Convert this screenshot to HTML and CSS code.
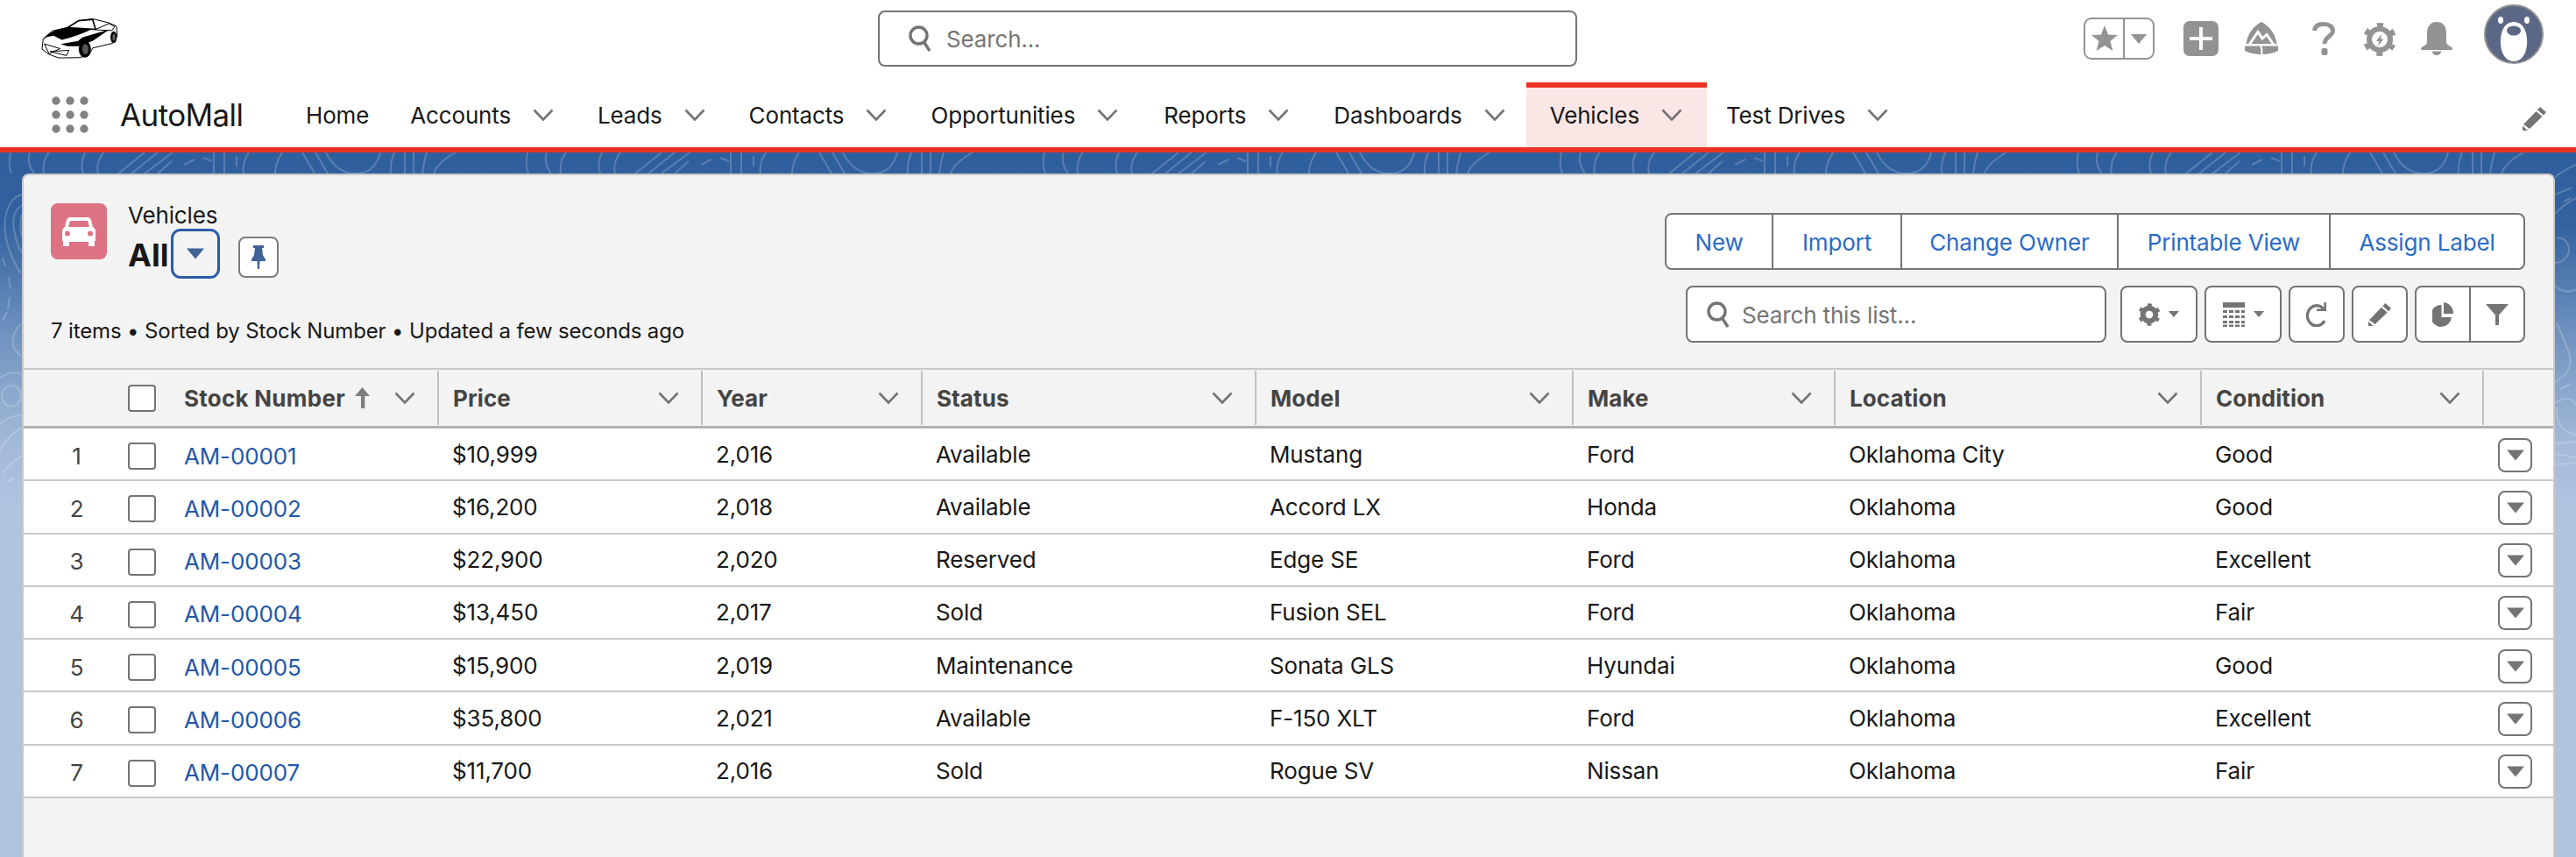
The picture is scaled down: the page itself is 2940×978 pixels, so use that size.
FILE: index.html
```html
<!DOCTYPE html>
<html lang="en">
<head>
    <meta charset="UTF-8">
    <title>Vehicles | AutoMall</title>
    <link rel="stylesheet" href="styles.css">
</head>
<body>
    <!-- shared icons -->
    <svg class="defs" width="0" height="0">
        <defs>
            <symbol id="chev" viewBox="0 0 24 14"><path d="M1.5 1.5 12 12.5 22.500 1.500" fill="none" stroke="currentColor" stroke-width="2.600"/></symbol>
            <symbol id="tri" viewBox="0 0 20 12"><path d="M0 0h20L10 12z" fill="currentColor"/></symbol>
        </defs>
    </svg>

    <!-- top bar -->
    <header class="topbar">
        <svg class="logo" viewBox="85 60 265 140">
            <path d="M88 168 92 132 124 105 176 94 214 70 262 64 320 78 344 90 346 124 330 148 262 164 248 190 214 197 146 198 112 186z" fill="#fff" stroke="#000" stroke-width="3"/>
            <path d="M92 136Q118 98 180 93L258 100Q208 124 156 136L128 122 104 126z" fill="#000"/>
            <path d="M176 94 214 70 262 66 272 100 214 96z" fill="#fff" stroke="#000" stroke-width="5"/>
            <path d="M272 100 318 80 338 90 328 104 280 102z" fill="#fff" stroke="#000" stroke-width="3"/>
            <path d="M152 150 212 140 226 128 320 100 262 140 214 158 176 158z" fill="#000"/>
            <path d="M96 150 150 166 112 184zM116 176 180 172 172 190z" fill="none" stroke="#000" stroke-width="3"/>
            <ellipse cx="235" cy="168" rx="21" ry="29" fill="#000"/>
            <ellipse cx="237" cy="168" rx="11" ry="18" fill="#555"/>
            <ellipse cx="334" cy="127" rx="11" ry="20" fill="#000"/>
            <ellipse cx="335" cy="127" rx="5" ry="11" fill="#666"/>
        </svg>

        <div class="global-search">
            <svg class="search-icon" viewBox="0 0 26 30"><circle cx="11.500" cy="11.500" r="9.500" fill="none" stroke="currentColor" stroke-width="3.400"/><path d="M17.500 19 24 29" stroke="currentColor" stroke-width="3.400" fill="none"/></svg>
            <span>Search...</span>
        </div>

        <div class="global-actions">
            <div class="fav-group">
                <span class="fav-star"><svg width="30" height="30" viewBox="0 0 30 30"><path d="M15 0l4 10.500 11 .6-8.600 7 3 11L15 23l-9.400 6.100 3-11L0 11.100l11-.6z" fill="#939393"/></svg></span>
                <span class="fav-arrow"><svg width="18" height="11"><use href="#tri"/></svg></span>
            </div>
            <svg class="plus" width="40" height="40" viewBox="0 0 40 40"><rect width="40" height="40" rx="7" fill="#939393"/><path d="M20 7v26M7 20h26" stroke="#fff" stroke-width="4" fill="none"/></svg>
            <svg class="trail" width="38" height="38" viewBox="0 0 38 38">
                <path d="M19 0C27 4 35 13 36.500 25H1.500C3 13 11 4 19 0z" fill="#939393"/>
                <path d="M5 26 15 11.500 20 19 25 14.500 33 26" fill="none" stroke="#fff" stroke-width="3"/>
                <path d="M0 27.500H38V33C28 38.500 10 38.500 0 33z" fill="#939393"/>
                <path d="M19 26c-2 3 2 5 0 8l1 4" stroke="#fff" stroke-width="2" fill="none"/>
            </svg>
            <svg class="help" width="26" height="38" viewBox="0 0 26 38"><path d="M2.500 10C3 5 7 2.500 13 2.500S23.500 5.500 23.500 10.500C23.500 16 14 17 14 25" fill="none" stroke="#939393" stroke-width="5"/><rect x="10.500" y="30" width="7" height="8" rx="2" fill="#939393"/></svg>
            <svg class="setup" width="36" height="38" viewBox="0 0 36 38">
                <g transform="translate(18 19) rotate(30)"><circle r="12" fill="none" stroke="#939393" stroke-width="6"/><circle r="16.500" fill="none" stroke="#939393" stroke-width="5" stroke-linejoin="round" stroke-dasharray="7 10.280" stroke-dashoffset="3.500"/></g>
                <path d="M20 12.500 14 21h3.500l-1.500 5.500 6.500-8h-3.500z" fill="#939393"/>
            </svg>
            <svg class="bell" width="38" height="38" viewBox="0 0 38 38"><path d="M19 0C27 0 30 6 30 13V23C30 26 33 27 36 29 38 30 37 32 35 32H3C1 32 0 30 2 29 5 27 8 26 8 23V13C8 6 11 0 19 0z" fill="#939393"/><path d="M14 33.500H24C24 37 21 38 19 38S14 37 14 33.500z" fill="#939393"/></svg>
            <svg class="avatar" width="68" height="68" viewBox="0 0 68 68">
                <circle cx="34" cy="34" r="33" fill="#5a6885" stroke="#8f8f8f" stroke-width="2"/>
                <path d="M34 20C46 20 50 34 49 46 48 58 42 65 34 65S20 58 19 46C18 34 22 20 34 20z" fill="#fff"/>
                <ellipse cx="34" cy="30" rx="8" ry="5.500" fill="#5a6885"/>
                <ellipse cx="19" cy="18" rx="3" ry="4" fill="#fff"/><ellipse cx="49" cy="18" rx="3" ry="4" fill="#fff"/>
            </svg>
        </div>
    </header>

    <!-- app nav -->
    <nav class="appnav">
        <svg class="launcher" width="42" height="42" viewBox="0 0 42 42" fill="#828282">
            <circle cx="5" cy="5" r="4.700"/><circle cx="21" cy="5" r="4.700"/><circle cx="37" cy="5" r="4.700"/>
            <circle cx="5" cy="21" r="4.700"/><circle cx="21" cy="21" r="4.700"/><circle cx="37" cy="21" r="4.700"/>
            <circle cx="5" cy="37" r="4.700"/><circle cx="21" cy="37" r="4.700"/><circle cx="37" cy="37" r="4.700"/>
        </svg>
        <span class="appname">AutoMall</span>
        <a class="tab tab-home">Home</a>
        <a class="tab">Accounts<svg class="chev"><use href="#chev"/></svg></a>
        <a class="tab">Leads<svg class="chev"><use href="#chev"/></svg></a>
        <a class="tab">Contacts<svg class="chev"><use href="#chev"/></svg></a>
        <a class="tab">Opportunities<svg class="chev"><use href="#chev"/></svg></a>
        <a class="tab tab-reports">Reports<svg class="chev"><use href="#chev"/></svg></a>
        <a class="tab tab-dash">Dashboards<svg class="chev"><use href="#chev"/></svg></a>
        <a class="tab active">Vehicles<svg class="chev"><use href="#chev"/></svg></a>
        <a class="tab last">Test Drives<svg class="chev"><use href="#chev"/></svg></a>
        <svg class="nav-edit" width="28" height="27" viewBox="0 0 28 27"><path d="M20 0 27 6 24 9.500 17 3.500zM15.500 5 22.500 11 8 25 1 20zM0 21.500 6 27H0z" fill="#747474"/></svg>
    </nav>

    <main class="content">
        <!-- background contour lines -->
        <svg class="contours" width="2940" height="804">
            <defs>
                <pattern id="topo" width="590" height="24" patternUnits="userSpaceOnUse">
                    <path d="M12 0q-3 14 1 24M34 0q-4 12 5 24M50 24q-2-14 6-24M97 0q-6 12-2 24M118 0q-9 12-6 24M135 24l30-24M150 24l30-24M165 24l32-24M180 24l16-14M210 14l12-6M232 6l10 4M244 0v24M256 0v24M270 4v12M284 0q-8 12-6 24M314 24q0-12 8-24M345 0l14 24M360 0l14 24M372 0q12 24 34 24 22 0 28-24M450 0q-5 12-4 24M462 0v24M472 0v24M482 24q2-14 5-24M495 24q4-12 25-24" fill="none" stroke="#fff" stroke-opacity=".2" stroke-width="2"/>
                </pattern>
            </defs>
            <rect width="2940" height="24" fill="url(#topo)"/>
            <g fill="none" stroke="#fff" stroke-opacity=".2" stroke-width="2">
                <path d="M25 48C8 52 4 76 6 92 8 110 18 130 24 138M25 60C16 66 14 76 16 88 18 100 22 110 25 114M25 70C23 78 23 88 25 96M3 120l3 10M10 142l2 14M11 165l-2 14M8 182l-5 10M24 196C14 204 12 220 18 226 20 228 22 230 24 232M0 258C8 250 20 250 25 254M2 278a11 12 0 1 1 22 0 11 12 0 1 1-22 0M0 310C8 302 18 300 25 300M0 340C8 326 16 318 25 314M2 368C10 356 18 350 25 346M8 376l8-4"/>
                <path d="M2916 28C2924 22 2930 18 2940 14M2916 48l20-8M2926 56l8-4M2916 70C2926 60 2932 56 2940 52M2918 98C2932 96 2934 112 2930 118 2926 124 2920 126 2916 126M2916 152C2924 160 2934 160 2940 156M2918 194 2932 228C2936 240 2934 252 2916 262M2922 270l12-6M2916 286C2928 278 2936 280 2940 288M2918 290C2916 310 2926 320 2940 322M2916 332l24-2M2916 344l24 4M2916 356l24-2"/>
            </g>
        </svg>

        <section class="card">
            <div class="list-head">
                <div class="head-left">
                    <div class="title-row">
                        <div class="object-tile">
                            <svg width="38" height="34" viewBox="0 0 38 34">
                                <path d="M9 1h20c2 0 3 1 4 3l2 8c2 1 3 3 3 5v11h-1v5c0 .6-.4 1-1 1h-5c-.6 0-1-.4-1-1v-4H8v4c0 .6-.4 1-1 1H2c-.6 0-1-.4-1-1v-5H0V17c0-2 1-4 3-5l2-8c1-2 2-3 4-3z" fill="#fff"/>
                                <path d="M9 5h20l2 7H7z" fill="#dd7283"/>
                                <circle cx="6" cy="19.500" r="3" fill="#dd7283"/><circle cx="32" cy="19.500" r="3" fill="#dd7283"/>
                            </svg>
                        </div>
                        <div class="title-text">
                            <div class="object-name">Vehicles</div>
                            <div class="view-row">
                                <span class="view-name">All</span>
                                <span class="view-switch"><svg width="20" height="13"><use href="#tri"/></svg></span>
                                <span class="view-pin">
                                    <svg width="16" height="27" viewBox="0 0 16 27"><path d="M2 0h12v3h-2l1 8 3 5v2H9.500l-.5 9H7l-.5-9H0v-2l3-5 1-8H2z" fill="#3f6299"/></svg>
                                </span>
                            </div>
                        </div>
                    </div>
                    <div class="meta">7 items • Sorted by Stock Number • Updated a few seconds ago</div>
                </div>
                <div class="head-right">
                    <div class="actions">
                        <a class="act act-new">New</a>
                        <a class="act act-import">Import</a>
                        <a class="act act-owner">Change Owner</a>
                        <a class="act act-print">Printable View</a>
                        <a class="act act-label">Assign Label</a>
                    </div>
                    <div class="tools">
                        <div class="list-search">
                            <svg class="search-icon" viewBox="0 0 26 30"><circle cx="11.500" cy="11.500" r="9.500" fill="none" stroke="currentColor" stroke-width="3.400"/><path d="M17.500 19 24 29" stroke="currentColor" stroke-width="3.400" fill="none"/></svg>
                            <span class="list-search-text">Search this list...</span>
                        </div>
                        <span class="tool tool-wide">
                            <svg width="24" height="28" viewBox="0 0 36 38">
                                <g transform="translate(18 19) rotate(30)"><circle r="11" fill="none" stroke="#747474" stroke-width="9"/><circle r="16.500" fill="none" stroke="#747474" stroke-width="5" stroke-dasharray="7 10.280" stroke-dashoffset="3.500"/></g>
                            </svg>
                            <svg class="mini-tri" width="12" height="15"><use href="#tri"/></svg>
                        </span>
                        <span class="tool tool-wide">
                            <svg width="25" height="28" viewBox="0 0 25 28" fill="#747474">
                                <rect width="25" height="6"/>
                                <path d="M0 9h5v3H0zM7 9h5v3H7zM14 9h5v3h-5zM21 9h4v3h-4zM0 15h5v3H0zM7 15h5v3H7zM14 15h5v3h-5zM21 15h4v3h-4zM0 21h5v3H0zM7 21h5v3H7zM14 21h5v3h-5zM21 21h4v3h-4zM0 25.500h5V28H0zM7 25.500h5V28H7zM14 25.500h5V28h-5zM21 25.500h4V28h-4z"/>
                            </svg>
                            <svg class="mini-tri" width="12" height="15"><use href="#tri"/></svg>
                        </span>
                        <span class="tool">
                            <svg width="24" height="28" viewBox="0 0 24 28"><path d="M21 9.500A10.500 11.500 0 1 0 21 21" fill="none" stroke="#747474" stroke-width="3.400"/><path d="M12 10h11V0h-2.600v7.500H12z" fill="#747474"/></svg>
                        </span>
                        <span class="tool">
                            <svg width="27" height="28" viewBox="0 0 28 27"><path d="M20 0 27 6 24 9.500 17 3.500zM15.500 5 22.500 11 8 25 1 20zM0 21.500 6 27H0z" fill="#747474"/></svg>
                        </span>
                        <div class="tool-pair">
                            <span class="tool-half">
                                <svg width="24" height="28" viewBox="0 0 24 28"><path d="M10.500 3A12 12.500 0 1 0 22 17H10.500z" fill="#747474"/><path d="M13 0V13H24C24 6 20 1 13 0z" fill="#747474"/></svg>
                            </span>
                            <span class="tool-half">
                                <svg width="26" height="24" viewBox="0 0 26 24"><path d="M0 0h26L15 12.500V24h-4V12.500z" fill="#747474"/></svg>
                            </span>
                        </div>
                    </div>
                </div>
            </div>

            <div class="grid-head row-grid">
                <div class="hcell-blank"></div>
                <div class="hcell-check"><span class="check"></span></div>
                <div class="hcell hcell-first"><span class="hlabel">Stock Number</span>
                    <svg class="sort" width="17" height="24" viewBox="0 0 17 24"><path d="M8.500 0 17 10h-5.600v14H7V10H0z" fill="#7d7d7d"/></svg>
                    <svg class="chev"><use href="#chev"/></svg></div>
                <div class="hcell"><span class="hlabel">Price</span><svg class="chev"><use href="#chev"/></svg></div>
                <div class="hcell"><span class="hlabel">Year</span><svg class="chev"><use href="#chev"/></svg></div>
                <div class="hcell"><span class="hlabel">Status</span><svg class="chev"><use href="#chev"/></svg></div>
                <div class="hcell"><span class="hlabel">Model</span><svg class="chev"><use href="#chev"/></svg></div>
                <div class="hcell"><span class="hlabel">Make</span><svg class="chev"><use href="#chev"/></svg></div>
                <div class="hcell"><span class="hlabel">Location</span><svg class="chev"><use href="#chev"/></svg></div>
                <div class="hcell"><span class="hlabel">Condition</span><svg class="chev"><use href="#chev"/></svg></div>
                <div></div>
            </div>

            <div class="row row-grid">
                <div class="num">1</div><div class="chk"><span class="check"></span></div><a class="stock">AM-00001</a>
                <div class="cell">$10,999</div><div class="cell">2,016</div><div class="cell">Available</div><div class="cell">Mustang</div><div class="cell">Ford</div><div class="cell">Oklahoma City</div><div class="cell">Good</div>
                <div class="act-cell"><span class="row-menu"><svg width="20" height="13"><use href="#tri"/></svg></span></div>
            </div>
            <div class="row row-grid">
                <div class="num">2</div><div class="chk"><span class="check"></span></div><a class="stock">AM-00002</a>
                <div class="cell">$16,200</div><div class="cell">2,018</div><div class="cell">Available</div><div class="cell">Accord LX</div><div class="cell">Honda</div><div class="cell">Oklahoma</div><div class="cell">Good</div>
                <div class="act-cell"><span class="row-menu"><svg width="20" height="13"><use href="#tri"/></svg></span></div>
            </div>
            <div class="row row-grid">
                <div class="num">3</div><div class="chk"><span class="check"></span></div><a class="stock">AM-00003</a>
                <div class="cell">$22,900</div><div class="cell">2,020</div><div class="cell">Reserved</div><div class="cell">Edge SE</div><div class="cell">Ford</div><div class="cell">Oklahoma</div><div class="cell">Excellent</div>
                <div class="act-cell"><span class="row-menu"><svg width="20" height="13"><use href="#tri"/></svg></span></div>
            </div>
            <div class="row row-grid">
                <div class="num">4</div><div class="chk"><span class="check"></span></div><a class="stock">AM-00004</a>
                <div class="cell">$13,450</div><div class="cell">2,017</div><div class="cell">Sold</div><div class="cell">Fusion SEL</div><div class="cell">Ford</div><div class="cell">Oklahoma</div><div class="cell">Fair</div>
                <div class="act-cell"><span class="row-menu"><svg width="20" height="13"><use href="#tri"/></svg></span></div>
            </div>
            <div class="row row-grid">
                <div class="num">5</div><div class="chk"><span class="check"></span></div><a class="stock">AM-00005</a>
                <div class="cell">$15,900</div><div class="cell">2,019</div><div class="cell">Maintenance</div><div class="cell">Sonata GLS</div><div class="cell">Hyundai</div><div class="cell">Oklahoma</div><div class="cell">Good</div>
                <div class="act-cell"><span class="row-menu"><svg width="20" height="13"><use href="#tri"/></svg></span></div>
            </div>
            <div class="row row-grid">
                <div class="num">6</div><div class="chk"><span class="check"></span></div><a class="stock">AM-00006</a>
                <div class="cell">$35,800</div><div class="cell">2,021</div><div class="cell">Available</div><div class="cell">F-150 XLT</div><div class="cell">Ford</div><div class="cell">Oklahoma</div><div class="cell">Excellent</div>
                <div class="act-cell"><span class="row-menu"><svg width="20" height="13"><use href="#tri"/></svg></span></div>
            </div>
            <div class="row row-grid">
                <div class="num">7</div><div class="chk"><span class="check"></span></div><a class="stock">AM-00007</a>
                <div class="cell">$11,700</div><div class="cell">2,016</div><div class="cell">Sold</div><div class="cell">Rogue SV</div><div class="cell">Nissan</div><div class="cell">Oklahoma</div><div class="cell">Fair</div>
                <div class="act-cell"><span class="row-menu"><svg width="20" height="13"><use href="#tri"/></svg></span></div>
            </div>
        </section>
    </main>
</body>
</html>
```
FILE: styles.css
```css
*{
    margin: 0;
    padding: 0;
    box-sizing: border-box;
}

html, body{
    width: 2940px;
    height: 978px;
    overflow: hidden;
}

body{
    font-family: Inter, "Liberation Sans", sans-serif;
    font-size: 26px;
    letter-spacing: -.15px;
    color: #181818;
    background-color: #fff;
}

.defs{
    display: block;
    height: 0;
}

/* top bar */
.topbar{
    height: 94px;
    display: flex;
    align-items: flex-start;
    position: relative;
}

.logo{
    width: 88px;
    height: 47px;
    margin: 20px 0 0 47px;
}

.global-search{
    width: 798px;
    height: 64px;
    margin: 12px 0 0 867px;
    padding-left: 33px;
    display: flex;
    align-items: center;
    gap: 17px;
    border: 2px solid #747474;
    border-radius: 8px;
    color: #747474;
}

.search-icon{
    width: 26px;
    height: 30px;
    color: #747474;
}

.global-actions{
    margin-left: 578px;
    display: flex;
    align-items: flex-start;
}

.fav-group{
    width: 81px;
    height: 48px;
    margin-top: 20px;
    display: flex;
    border: 2.500px solid #939393;
    border-radius: 9px;
    color: #939393;
}

.fav-star{
    width: 45px;
    display: flex;
    align-items: center;
    justify-content: center;
    border-right: 2px solid #939393;
}

.fav-arrow{
    flex: 1;
    display: flex;
    align-items: center;
    justify-content: center;
}

.plus{ margin: 24px 0 0 33px; }
.trail{ margin: 25px 0 0 30px; }
.help{ margin: 25px 0 0 39px; }
.setup{ margin: 26px 0 0 33px; }
.bell{ margin: 25px 0 0 28px; }
.avatar{ margin: 5px 0 0 35px; }

/* app nav */
.appnav{
    height: 80px;
    display: flex;
    align-items: stretch;
    border-bottom: 6px solid #ea3323;
    background-color: #fff;
}

.launcher{
    margin: 16px 0 0 59px;
}

.appname{
    margin-left: 36px;
    width: 187px;
    font-size: 35px;
    line-height: 74px;
    letter-spacing: -.6px;
    color: #181818;
}

.tab{
    display: flex;
    align-items: center;
    padding: 0 25px;
    height: 74px;
    color: #181818;
    white-space: nowrap;
}

.tab .chev{
    margin-left: 25px;
}

.tab-home{ margin-right: -3px; }
.tab-reports{ margin-left: 2px; }
.tab-dash{ margin-left: 1px; }

.tab.active{
    padding: 0 28px 6px 27px;
    margin-right: -3px;
    height: 74px;
    background-color: #fae6e5;
    border-top: 6px solid #ea3323;
    margin-left: -1px;
}

.tab.last{
    margin-left: 0;
}

.chev{
    width: 24px;
    height: 14px;
    color: #747474;
    flex: none;
}

.nav-edit{
    position: absolute;
    left: 2879px;
    top: 122px;
}

/* page */
.content{
    height: 804px;
    padding: 24px 24px 0 25px;
    position: relative;
    background: linear-gradient(180deg, #2e5e9c 0, #32629f 80px, #6c90be 200px, #a3b9d8 330px, #b1c3df 400px, #b1c3df 100%);
}

.contours{
    position: absolute;
    left: 0;
    top: 0;
}

.card{
    position: relative;
    height: 780px;
    border: 2px solid #c9c9c9;
    border-bottom: 0;
    border-radius: 8px 8px 0 0;
    background-color: #f3f3f3;
}

.list-head{
    height: 220px;
    padding: 32px 32px 0 31px;
    display: flex;
    justify-content: space-between;
}

.title-row{
    display: flex;
    gap: 24px;
}

.object-tile{
    width: 64px;
    height: 64px;
    border-radius: 8px;
    background-color: #dd7283;
    display: flex;
    align-items: center;
    justify-content: center;
}

.object-name{
    line-height: 30px;
    margin-top: -1px;
}

.view-row{
    height: 57px;
    display: flex;
    align-items: center;
}

.view-name{
    font-size: 36px;
    font-weight: 700;
    letter-spacing: 0;
    width: 49px;
    padding-top: 2px;
}

.view-switch{
    width: 56px;
    height: 57px;
    display: flex;
    align-items: center;
    justify-content: center;
    border: 3.500px solid #2a5ca8;
    border-radius: 11px;
    color: #3f6299;
}

.view-pin{
    width: 46px;
    height: 47px;
    margin: 7px 0 0 21px;
    display: flex;
    align-items: center;
    justify-content: center;
    background-color: #fff;
    border: 2px solid #7c7c7c;
    border-radius: 8px;
}

.meta{
    margin-top: 45px;
    font-size: 24px;
    line-height: 30px;
}

.head-right{
    padding-top: 11px;
    display: flex;
    flex-direction: column;
    align-items: flex-end;
}

.actions{
    height: 65px;
    display: flex;
    background-color: #fff;
    border: 2px solid #747474;
    border-radius: 8px;
}

.act{
    display: flex;
    align-items: center;
    justify-content: center;
    padding-top: 2px;
    color: #2a6bc9;
    border-right: 2px solid #747474;
}

.act-new{ width: 122px; }
.act-import{ width: 147px; }
.act-owner{ width: 247px; }
.act-print{ width: 242px; }
.act-label{ width: 220px; border-right: 0; }

.tools{
    margin-top: 18px;
    display: flex;
    gap: 8px;
}

.list-search{
    width: 480px;
    height: 65px;
    margin-right: 8px;
    padding-left: 22px;
    display: flex;
    align-items: center;
    gap: 14px;
    background-color: #fff;
    border: 2px solid #747474;
    border-radius: 8px;
    color: #747474;
}

.list-search-text{
    padding-top: 2px;
}

.tool{
    width: 64px;
    height: 65px;
    display: flex;
    align-items: center;
    justify-content: center;
    gap: 10px;
    background-color: #fff;
    border: 2px solid #747474;
    border-radius: 8px;
}

.tool-wide{
    width: 88px;
}

.mini-tri{
    width: 12px;
    height: 15px;
    color: #747474;
}

.tool-pair{
    width: 126px;
    height: 65px;
    display: flex;
    background-color: #fff;
    border: 2px solid #747474;
    border-radius: 8px;
}

.tool-half{
    flex: 1;
    display: flex;
    align-items: center;
    justify-content: center;
}

.tool-half + .tool-half{
    border-left: 2px solid #747474;
}

/* list view grid */
.row-grid{
    display: grid;
    grid-template-columns: 119px 65px 288px 301px 251px 381px 362px 299px 418px 322px 1fr;
}

.grid-head{
    height: 69px;
    align-items: center;
    border-top: 2px solid #c9c9c9;
    border-bottom: 3px solid #b0b0b0;
    background-color: #f3f3f3;
}

.hcell{
    height: 62px;
    margin-right: -2px;
    padding: 0 25px 0 18px;
    display: flex;
    align-items: center;
    border-right: 2px solid #c0c0c0;
    color: #444;
    font-weight: 700;
    letter-spacing: .1px;
}

.hcell-first{
    padding-left: 0;
}

.hlabel{
    flex: 1;
    white-space: nowrap;
}

.hcell-first .hlabel{
    flex: none;
    margin-left: -1px;
    letter-spacing: .25px;
}

.sort{
    margin-left: 11px;
    margin-right: auto;
}

.check{
    display: block;
    width: 32px;
    height: 31px;
    background-color: #fff;
    border: 2px solid #747474;
    border-radius: 4px;
}

.row{
    height: 60.250px;
    align-items: center;
    background-color: #fff;
    border-bottom: 2px solid #c9c9c9;
}

.num{
    text-align: center;
    color: #444;
    padding: 4px 0 0 2px;
}

.chk{
    padding-top: 5px;
}

.stock{
    color: #2258a8;
    padding-top: 4px;
    margin-left: -1px;
}

.cell{
    padding: 0 0 0 17px;
    white-space: nowrap;
}

.act-cell{
    padding-top: 2px;
    display: flex;
    justify-content: flex-end;
    padding-right: 24px;
}

.row-menu{
    width: 39px;
    height: 39px;
    display: flex;
    align-items: center;
    justify-content: center;
    border: 2px solid #747474;
    border-radius: 8px;
    color: #747474;
}
```
